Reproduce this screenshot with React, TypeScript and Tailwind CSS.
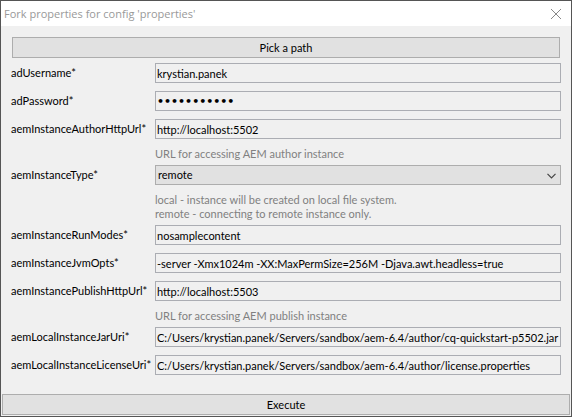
import React from "react";

type Field = {
  name: string;
  value: string;
  kind?: "text" | "password" | "select";
  hints?: string[];
};

const fields: Field[] = [
  { name: "adUsername", value: "krystian.panek" },
  { name: "adPassword", value: "password123", kind: "password" },
  {
    name: "aemInstanceAuthorHttpUrl",
    value: "http://localhost:5502",
    hints: ["URL for accessing AEM author instance"],
  },
  {
    name: "aemInstanceType",
    value: "remote",
    kind: "select",
    hints: [
      "local - instance will be created on local file system.",
      "remote - connecting to remote instance only.",
    ],
  },
  { name: "aemInstanceRunModes", value: "nosamplecontent" },
  {
    name: "aemInstanceJvmOpts",
    value: "-server -Xmx1024m -XX:MaxPermSize=256M -Djava.awt.headless=true",
  },
  {
    name: "aemInstancePublishHttpUrl",
    value: "http://localhost:5503",
    hints: ["URL for accessing AEM publish instance"],
  },
  {
    name: "aemLocalInstanceJarUri",
    value: "C:/Users/krystian.panek/Servers/sandbox/aem-6.4/author/cq-quickstart-p5502.jar",
  },
  {
    name: "aemLocalInstanceLicenseUri",
    value: "C:/Users/krystian.panek/Servers/sandbox/aem-6.4/author/license.properties",
  },
];

const inputStyle = "h-5 min-w-0 flex-1 border border-[#abadb3] bg-[#f0f0f0] pl-px text-black outline-none";

function Control({ field }: { field: Field }) {
  if (field.kind === "select") {
    return (
      <div className="relative flex min-w-0 flex-1">
        <select
          id={field.name}
          defaultValue={field.value}
          className="h-5 w-full appearance-none border border-[#adadad] bg-[#e1e1e1] px-[2px] text-black outline-none"
        >
          <option>local</option>
          <option>remote</option>
        </select>
        <svg
          viewBox="0 0 9 6"
          className="pointer-events-none absolute top-2 right-[5px] h-[6px] w-[9px]"
          fill="none"
          stroke="#444"
          strokeWidth="1.2"
        >
          <path d="M0.5 0.8 L4.5 4.8 L8.5 0.8" />
        </svg>
      </div>
    );
  }
  if (field.kind === "password") {
    return (
      <input
        id={field.name}
        type="password"
        defaultValue={field.value}
        className={`${inputStyle} font-['DejaVu_Sans',sans-serif] font-bold`}
      />
    );
  }
  return <input id={field.name} type="text" defaultValue={field.value} className={inputStyle} />;
}

export default function App() {
  return (
    <div className="flex min-h-screen flex-col border border-[#555] bg-[#f0f0f0] font-['Lato',sans-serif] text-[11px] leading-[14px] text-black">
      <header className="flex h-[25px] items-center justify-between bg-white pr-[10px] pl-[3px] text-[#999]">
        <h1 className="font-['Open_Sans',sans-serif]">Fork properties for config 'properties'</h1>
        <button type="button" aria-label="Close" className="p-0">
          <svg viewBox="0 0 10 10" className="h-[10px] w-[10px]" fill="none" stroke="#888" strokeWidth="1">
            <path d="M0 0 L10 10 M10 0 L0 10" />
          </svg>
        </button>
      </header>
      <form className="flex flex-1 flex-col justify-between" onSubmit={(e) => e.preventDefault()}>
        <div className="flex flex-col px-[10px] pt-[11px]">
          <button type="button" className="mx-px h-[21px] border border-[#adadad] bg-[#e1e1e1]">
            Pick a path
          </button>
          <div className="flex flex-col pt-[5px]">
            {fields.map((field) => (
              <div key={field.name}>
                <div className="mb-2 flex items-center">
                  <label htmlFor={field.name} className="w-36 shrink-0 whitespace-nowrap">
                    {field.name}*
                  </label>
                  <Control field={field} />
                </div>
                {field.hints && (
                  <div className="mb-1 pl-36 text-[#808080]">
                    {field.hints.map((hint) => (
                      <p key={hint}>{hint}</p>
                    ))}
                  </div>
                )}
              </div>
            ))}
          </div>
        </div>
        <div className="flex px-px pb-px">
          <button type="submit" className="h-[21px] flex-1 border border-[#adadad] bg-[#e1e1e1]">
            Execute
          </button>
        </div>
      </form>
    </div>
  );
}
